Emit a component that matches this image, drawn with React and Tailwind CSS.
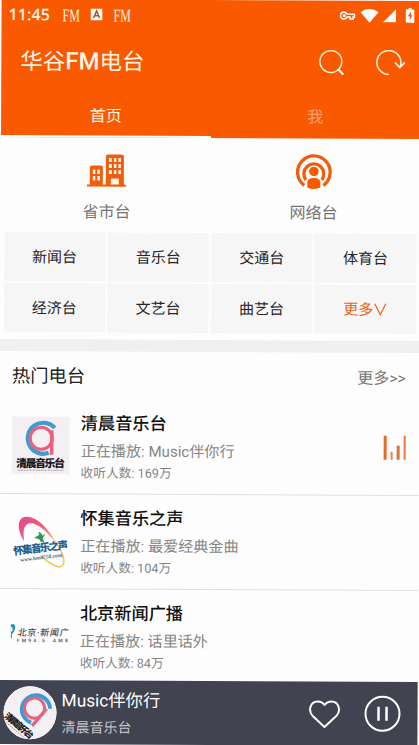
import { useState } from 'react';

const categories = ['新闻台', '音乐台', '交通台', '体育台', '经济台', '文艺台', '曲艺台', '更多'];

const MorningLogo = ({ className, textLength = 49, fontSize = 11 }) => (
  <svg viewBox="0 0 58 58" className={className}>
    <rect width="58" height="58" fill="#f3eff2" />
    <path d="M43 11.5A15.5 15.5 0 1 0 37 36.5" fill="none" stroke="#3d9bd0" strokeWidth="4.2" />
    <circle cx="29.5" cy="22" r="11" fill="none" stroke="#e8627f" strokeWidth="3.2" />
    <path d="M40 14V38.5" stroke="#e8627f" strokeWidth="3.6" />
    <text x="29" y="51" textAnchor="middle" textLength={textLength} fontSize={fontSize} fontWeight="900" fill="#1c1719">
      清晨音乐台
    </text>
    <path d="M6 54H52" stroke="#8a8386" strokeWidth="0.8" strokeDasharray="2 1" />
  </svg>
);

const HuaijiLogo = () => (
  <svg viewBox="0 0 58 58" className="size-[58px]">
    <defs>
      <linearGradient id="swoosh" x1="0" y1="0" x2="1" y2="1">
        <stop offset="0" stopColor="#e04a96" />
        <stop offset="0.5" stopColor="#ef5d74" />
        <stop offset="1" stopColor="#f4b27a" />
      </linearGradient>
    </defs>
    <path d="M13 30C6 20 5 7 14 5.5C26 5 38 18 44 31C35 19 25 11 18 12C11 14 12 23 13 30Z" fill="url(#swoosh)" />
    <path d="M50 41C56 53 51 58 43 54C37 51 33 48 31 45" fill="none" stroke="#f0cb62" strokeWidth="1.7" />
    <path d="M43 29C47 34 51 40 52 46" fill="none" stroke="#f3b37d" strokeWidth="1.2" />
    <path d="M23 26.5L28 23.5L27 20.5Q31 22 31 24.5L34 22.5L31.5 27L33 31.5Q29 31 28 28Z" fill="#2a9a52" />
    <g transform="rotate(-7 29 38)">
      <text x="2" y="40.5" textLength="55" fontSize="10.5" fontWeight="900" fill="#275e8e">
        怀集音乐之声
      </text>
      <text x="8" y="48" textLength="42" fontSize="5.5" fontWeight="700" fontFamily="Liberation Serif, serif" fill="#3f6d98">
        www.hm0758.com
      </text>
    </g>
  </svg>
);

const BeijingLogo = () => (
  <svg viewBox="0 0 58 58" className="size-[58px]">
    <path d="M-1 18H3Q5 19 4 23Q3 27 1 28V32H-1Z" fill="#2a93b8" />
    <path d="M-1 21H1.5V25L-1 26Z" fill="#fff" />
    <g transform="skewX(-9)">
      <text x="11" y="29.5" textLength="51" fontSize="9" fontWeight="500" fill="#4b4545">
        北京·新闻广
      </text>
    </g>
    <text x="6" y="36" textLength="28" fontSize="5" fontWeight="700" fill="#6b6565">FM94.5</text>
    <text x="42" y="36" textLength="15" fontSize="5" fontWeight="700" fill="#6b6565">AM8</text>
  </svg>
);

const stations = [
  { name: '清晨音乐台', playing: 'Music伴你行', count: '169万', logo: <MorningLogo className="size-[58px]" /> },
  { name: '怀集音乐之声', playing: '最爱经典金曲', count: '104万', logo: <HuaijiLogo /> },
  { name: '北京新闻广播', playing: '话里话外', count: '84万', logo: <BeijingLogo /> },
];

const StatusBar = () => (
  <div className="flex h-[29px] items-center pl-[7px] pr-1.5">
    <span className="w-[54px] font-['Open_Sans'] text-base font-semibold tracking-[0.1px]">11:45</span>
    <span className="flex w-7 pt-0.5">
      <span className="inline-block origin-left scale-x-[0.66] font-['Liberation_Serif'] text-lg leading-none">FM</span>
    </span>
    <svg viewBox="0 0 12 12" className="mr-[11px] size-3">
      <rect width="12" height="12" rx="1" fill="#fff" />
      <path d="M3 9.5L6 2.5L9 9.5M4 7.2H8" fill="none" stroke="#a8542c" strokeWidth="1.5" />
    </svg>
    <span className="inline-block origin-left scale-x-[0.66] pt-0.5 font-['Liberation_Serif'] text-lg leading-none">FM</span>
    <div className="ml-auto flex items-center text-white">
      <svg viewBox="0 0 16 10" className="mr-[5px] h-2.5 w-4" fill="none" stroke="currentColor" strokeWidth="1.5">
        <path d="M7.5 3.5H15V6.5H13.5V8.5H10.5V6.5H7.5A3.5 3.5 0 1 1 7.5 3.5Z" />
        <circle cx="4.7" cy="5" r="0.8" fill="currentColor" />
      </svg>
      <svg viewBox="0 0 18 14" className="mr-1 h-3.5 w-[18px]">
        <path d="M0 3.5Q9 -3.5 18 3.5L9 14Z" fill="currentColor" />
      </svg>
      <svg viewBox="0 0 14 14" className="mr-[9px] h-3.5 w-3.5">
        <path d="M13.5 0.5V13.5H0.5Z" fill="currentColor" />
      </svg>
      <svg viewBox="0 0 9 15" className="h-[15px] w-[9px]">
        <path d="M3 0H6V1.5H8Q9 1.5 9 2.5V14Q9 15 8 15H1Q0 15 0 14V2.5Q0 1.5 1 1.5H3Z" fill="currentColor" />
        <path d="M5.3 3.5L2.3 8.5H4.2V12.5L7 7.3H5.3Z" fill="#f95a00" />
      </svg>
    </div>
  </div>
);

const App = () => {
  const [tab, setTab] = useState(0);

  return (
    <div className="h-[745px] w-[419px] overflow-hidden bg-[#fdfdfd] font-['Roboto','Noto_Sans_CJK_SC',sans-serif]">
      <div className="flex h-[745px] w-[419px] rotate-[0.25deg] flex-col">
        {/* Header */}
        <header className="h-[138px] bg-[#f95a00] text-[#fff5e6]">
          <StatusBar />
          <div className="flex h-[66px] items-center pl-[19px] pr-[15px]">
            <h1 className="text-[22.5px] leading-8">
              华谷<span className="text-[24px] font-medium">FM</span>电台
            </h1>
            <svg viewBox="0 0 26 26" className="ml-auto mr-[30px] size-[26px]" fill="none" stroke="currentColor">
              <circle cx="12.5" cy="12" r="11" strokeWidth="1.3" />
              <path d="M19.5 19.5L25 25" strokeWidth="2.2" />
            </svg>
            <svg viewBox="0 0 31 26" className="h-[26px] w-[31px]" fill="none" stroke="currentColor" strokeWidth="1.5">
              <path d="M14.5 24.7A12 12 0 1 1 25.5 17.5" />
              <path d="M20.5 12.5L25.5 17.7L30.5 12.5" strokeWidth="1.7" />
            </svg>
          </div>
          <div className="grid h-[43px] grid-cols-2 text-base">
            {['首页', '我'].map((label, i) => (
              <button
                key={label}
                onClick={() => setTab(i)}
                className={`border-b-2 pt-0.5 ${tab === i ? 'border-white' : 'border-transparent text-[#ffa070]'}`}
              >
                {label}
              </button>
            ))}
          </div>
        </header>

        {/* Region / network entries */}
        <div className="grid h-[95px] grid-cols-2 text-base text-[#757575]">
          <div className="flex flex-col items-center pt-4 pl-0.5">
            <svg viewBox="0 0 40 34" className="h-[34px] w-10" fill="#ef5d0d">
              <path d="M0 31H3V14Q3 12 5 12H14Q16 12 16 14V31H19V3Q19 1 21 1H34Q37 1 37 3V31H39V33H0Z" />
              <g fill="#fff3e4">
                <path d="M6 16H8.5V20.5H6ZM10.5 16H13V20.5H10.5ZM6 22.5H8.5V27H6ZM10.5 22.5H13V27H10.5Z" />
                <path d="M22 4.5H25V8.5H22ZM27 4.5H29.5V8.5H27ZM31.5 4.5H34V8.5H31.5ZM22 10.5H25V14.5H22ZM27 10.5H29.5V14.5H27ZM31.5 10.5H34V14.5H31.5ZM22 16.5H25V20.5H22ZM27 16.5H29.5V20.5H27ZM31.5 16.5H34V20.5H31.5ZM24 25H32V31H24Z" />
              </g>
            </svg>
            <span className="mt-[13px] leading-6">省市台</span>
          </div>
          <div className="flex flex-col items-center pt-[15px] pr-[3px]">
            <svg viewBox="0 0 36 36" className="size-9" fill="none" stroke="#ef5d0d">
              <path d="M8.5 32A16.3 16.3 0 1 1 27.5 32" strokeWidth="3.3" />
              <path d="M10 26.5A10 10 0 1 1 26 26.5" strokeWidth="3.3" />
              <circle cx="18" cy="18" r="4.8" fill="#f95a00" stroke="none" />
              <path d="M11.5 34V29Q11.5 24.5 18 24.5T24.5 29V34Q18 37 11.5 34Z" fill="#f95a00" stroke="none" />
            </svg>
            <span className="mt-3 leading-6">网络台</span>
          </div>
        </div>

        {/* Category grid */}
        <div className="grid h-[107px] grid-cols-4 grid-rows-[49px_49px] gap-x-[2.5px] gap-y-0.5 px-[3.5px] text-[15px] text-[#262626]">
          {categories.map((name, i) => (
            <button key={name} className={`bg-[#f6f6f6] pt-px ${i === 7 ? 'text-[#ef6015]' : ''}`}>
              {i === 7 ? (
                <span className="inline-flex items-center">
                  {name}
                  <svg viewBox="0 0 14 14" className="h-3.5 w-3.5" fill="none" stroke="currentColor">
                    <path d="M1.5 1L7 12L12.5 1" strokeWidth="1.2" />
                  </svg>
                </span>
              ) : (
                name
              )}
            </button>
          ))}
        </div>
        <div className="h-3 bg-[#f0f0f0]" />

        {/* Hot stations */}
        <div className="flex h-12 items-center justify-between pl-3 pr-[13px]">
          <h2 className="pt-px text-[18.3px] text-[#222]">热门电台</h2>
          <span className="pt-[3px] text-base text-[#777]">更多&gt;&gt;</span>
        </div>
        <div className="h-[281px] overflow-hidden">
          {stations.map((s, i) => (
            <div key={s.name} className="flex h-[95px] border-b border-[#dedede] pl-3 pr-[13px]">
              <div className="w-[69px] pt-[17px]">{s.logo}</div>
              <div className="pt-[11px]">
                <p className="text-[17.2px] font-medium leading-[26px] text-[#111]">{s.name}</p>
                <p className="mt-[3px] text-[15.1px] leading-6 text-[#858585]">正在播放: {s.playing}</p>
                <p className="text-[12.7px] leading-5 text-[#858585]">收听人数: {s.count}</p>
              </div>
              {i === 0 && (
                <div className="ml-auto flex h-[59px] items-end gap-1">
                  <i className="h-6 w-[2.5px] bg-[#e8692a]" />
                  <i className="h-2 w-[2.5px] bg-[#dd8350]" />
                  <i className="h-3.5 w-[2.5px] bg-[#d5743d]" />
                  <i className="h-6 w-[2.5px] bg-[#e8783d]" />
                </div>
              )}
            </div>
          ))}
        </div>

        {/* Player */}
        <footer className="flex h-16 items-center bg-[#414350] pl-[5px] pr-4">
          <div className="size-[53px] overflow-hidden rounded-full bg-[#f3eff2]">
            <MorningLogo className="size-[53px] rotate-[40deg]" textLength={38} fontSize={9.5} />
          </div>
          <div className="ml-[5px] pt-0.5">
            <p className="text-[17.3px] leading-[26px] text-white">Music伴你行</p>
            <p className="mt-0.5 text-sm leading-6 text-[#c4c4ca]">清晨音乐台</p>
          </div>
          <svg viewBox="0 0 32 29" className="ml-auto mr-[23px] h-[29px] w-8" fill="none" stroke="#fff" strokeWidth="2" strokeLinejoin="round">
            <path d="M16 27.500L4 16.200C-0.500 11.500 1.500 2 9 2C12.500 2 14.500 3.500 16 5.500C17.500 3.500 19.500 2 23 2C30.500 2 32.500 11.500 28 16.200Z" />
          </svg>
          <svg viewBox="0 0 38 38" className="size-[38px]" fill="none" stroke="#fff">
            <circle cx="19" cy="19" r="17" strokeWidth="2" />
            <path d="M15 12V26M23 12V26" strokeWidth="2.5" />
          </svg>
        </footer>
      </div>
    </div>
  );
};

export default App;
